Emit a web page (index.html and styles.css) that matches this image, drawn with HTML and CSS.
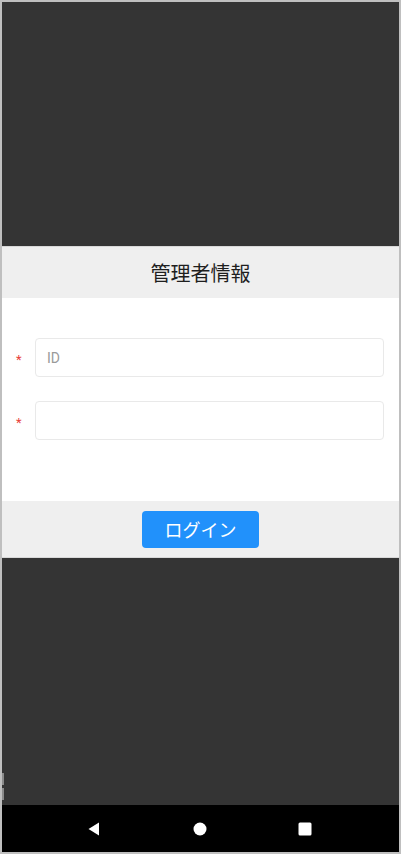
FILE: index.html
```html
<!DOCTYPE html>
<html lang="ja">
<head>
    <meta charset="UTF-8">
    <meta name="viewport" content="width=device-width, initial-scale=1.0">
    <title>管理者情報</title>
    <link rel="stylesheet" href="styles.css">
</head>
<body>
    <div class="device">
        <div class="screen">
            <div class="backdrop top"></div>
            <div class="dialog">
                <div class="dialog-header">管理者情報</div>
                <form class="dialog-body">
                    <div class="field">
                        <span class="required">*</span>
                        <input type="text" class="input" placeholder="ID">
                    </div>
                    <div class="field">
                        <span class="required">*</span>
                        <input type="password" class="input">
                    </div>
                </form>
                <div class="dialog-footer">
                    <button type="button" class="login-btn">ログイン</button>
                </div>
            </div>
            <div class="backdrop bottom">
                <div class="scroll-mark"></div>
                <div class="scroll-mark"></div>
            </div>
            <div class="navbar">
                <svg width="16" height="16" viewBox="0 0 16 16"><path d="M13 1.5 L13 14.5 L2.5 8 Z" fill="#fff"/></svg>
                <svg width="16" height="16" viewBox="0 0 16 16"><circle cx="8" cy="8" r="6.5" fill="#fff"/></svg>
                <svg width="16" height="16" viewBox="0 0 16 16"><rect x="1.5" y="1.5" width="13" height="13" rx="1.5" fill="#fff"/></svg>
            </div>
        </div>
    </div>
</body>
</html>
```

FILE: styles.css
```css
body {
    margin: 0;
    font-family: Roboto, "Noto Sans CJK JP", sans-serif;
    background: #fff;
}

.device {
    width: 401px;
    height: 854px;
    box-sizing: border-box;
    border: 2px solid #bfbfbf;
}

.screen {
    height: 100%;
    display: flex;
    flex-direction: column;
    background: #343434;
}

.backdrop.top {
    height: 244px;
}

.backdrop.bottom {
    flex: 1;
    display: flex;
    flex-direction: column;
    justify-content: flex-end;
    gap: 3px;
    padding-bottom: 5px;
}

.scroll-mark {
    width: 2px;
    height: 12px;
    background: #8a8a8a;
}

.dialog {
    background: #fff;
    border-top: 1px solid #d8d8d8;
    border-bottom: 1px solid #d8d8d8;
}

.dialog-header {
    height: 51px;
    background: #efefef;
    display: flex;
    align-items: center;
    justify-content: center;
    font-size: 20px;
    color: #1e1e1e;
}

.dialog-body {
    margin: 0;
    padding: 40px 15px 61px 14px;
    display: flex;
    flex-direction: column;
    gap: 24px;
}

.field {
    display: flex;
    align-items: center;
}

.required {
    width: 19px;
    color: #e8413a;
    font-size: 13px;
    padding-top: 3px;
}

.input {
    flex: 1;
    height: 39px;
    box-sizing: border-box;
    border: 1px solid #e9e9e9;
    border-radius: 4px;
    padding: 0 11px;
    font-family: Roboto, "Noto Sans CJK JP", sans-serif;
    font-size: 14px;
    color: #333;
    outline: none;
}

.input::placeholder {
    color: #9a9a9a;
}

.dialog-footer {
    height: 56px;
    background: #efefef;
    display: flex;
    align-items: center;
    justify-content: center;
}

.login-btn {
    width: 117px;
    height: 37px;
    background: #2191fb;
    color: #fff;
    border: none;
    border-radius: 4px;
    font-size: 18px;
    font-family: Roboto, "Noto Sans CJK JP", sans-serif;
    cursor: pointer;
}

.navbar {
    height: 47px;
    background: #000;
    display: flex;
    align-items: center;
    justify-content: space-between;
    padding: 0 86px 0 84px;
}
```
